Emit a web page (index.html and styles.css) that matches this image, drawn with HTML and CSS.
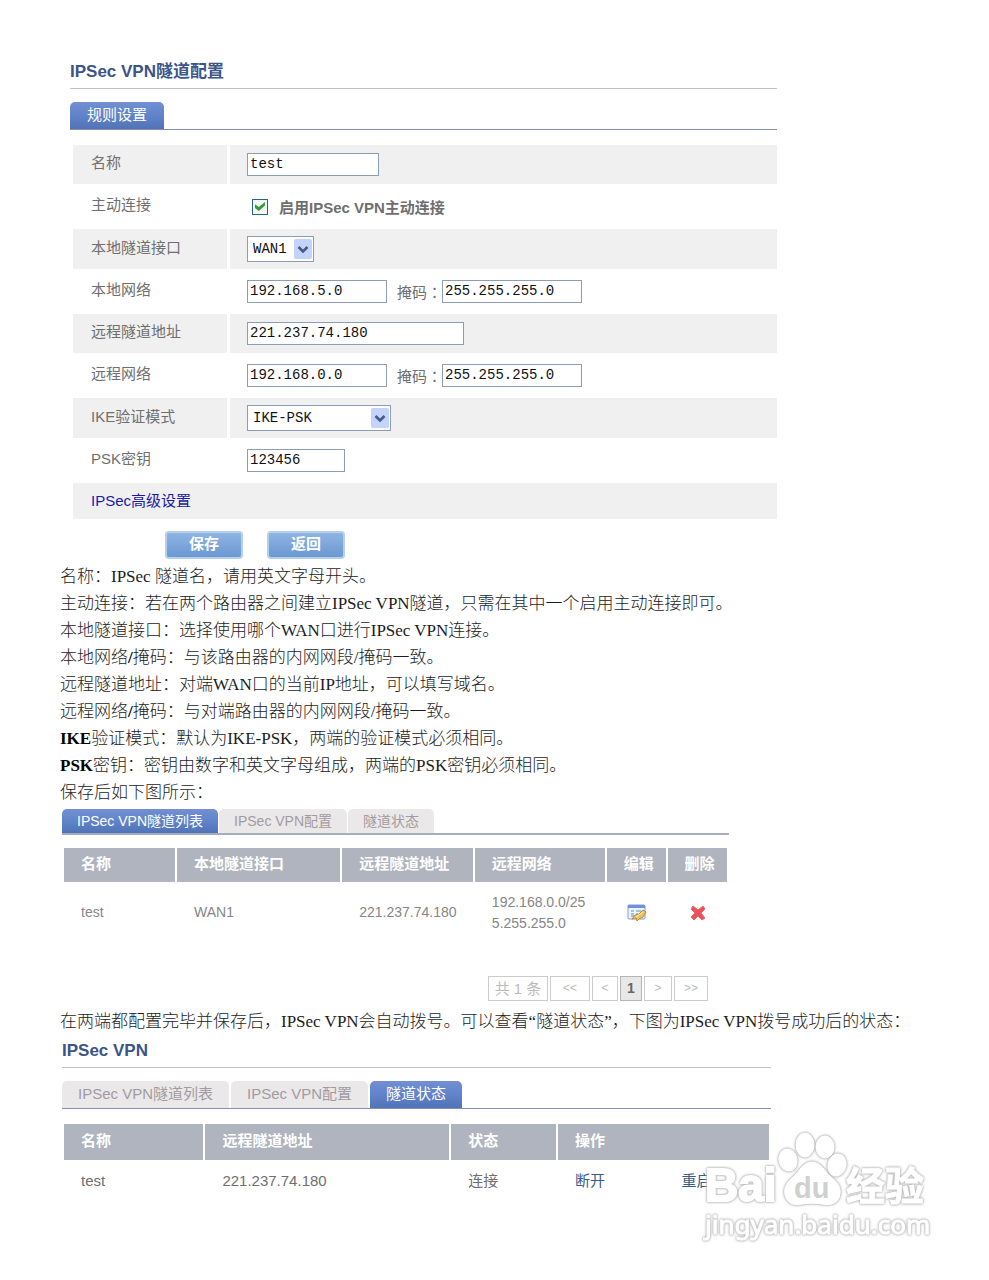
FILE: index.html
```html
<!DOCTYPE html>
<html lang="zh-CN">
<head>
<meta charset="utf-8">
<meta name="viewport" content="width=device-width, initial-scale=1">
<title>IPSec VPN隧道配置</title>
<link rel="stylesheet" href="styles.css">
</head>
<body>
<main class="page">
  <section class="panel panel-config">
    <h1 class="title">IPSec VPN隧道配置</h1>
    <nav class="tabs">
      <button type="button" class="tab active">规则设置</button>
    </nav>
    <form class="form">
      <div class="row shaded">
        <label class="name" for="name">名称</label>
        <div class="field"><input class="text w-name" id="name" type="text" value="test"></div>
      </div>
      <div class="row">
        <span class="name">主动连接</span>
        <div class="field">
          <input class="check" id="active" type="checkbox" checked>
          <label class="check-label" for="active">启用IPSec VPN主动连接</label>
        </div>
      </div>
      <div class="row shaded">
        <label class="name" for="iface">本地隧道接口</label>
        <div class="field"><select class="select w-iface" id="iface"><option>WAN1</option></select></div>
      </div>
      <div class="row">
        <label class="name" for="lnet">本地网络</label>
        <div class="field">
          <input class="text w-ip" id="lnet" type="text" value="192.168.5.0">
          <label class="mask" for="lmask" lang="zh-TW">掩码：</label>
          <input class="text w-ip" id="lmask" type="text" value="255.255.255.0">
        </div>
      </div>
      <div class="row shaded">
        <label class="name" for="raddr">远程隧道地址</label>
        <div class="field"><input class="text w-addr" id="raddr" type="text" value="221.237.74.180"></div>
      </div>
      <div class="row">
        <label class="name" for="rnet">远程网络</label>
        <div class="field">
          <input class="text w-ip" id="rnet" type="text" value="192.168.0.0">
          <label class="mask" for="rmask" lang="zh-TW">掩码：</label>
          <input class="text w-ip" id="rmask" type="text" value="255.255.255.0">
        </div>
      </div>
      <div class="row shaded">
        <label class="name" for="ike">IKE验证模式</label>
        <div class="field"><select class="select w-ike" id="ike"><option>IKE-PSK</option></select></div>
      </div>
      <div class="row">
        <label class="name" for="psk">PSK密钥</label>
        <div class="field"><input class="text w-psk" id="psk" type="text" value="123456"></div>
      </div>
      <div class="advanced"><a href="#advanced">IPSec高级设置</a></div>
      <div class="actions">
        <button type="button" class="btn">保存</button>
        <button type="button" class="btn">返回</button>
      </div>
    </form>
  </section>

  <section class="prose">
    <p>名称：IPSec 隧道名，请用英文字母开头。</p>
    <p>主动连接：若在两个路由器之间建立IPSec VPN隧道，只需在其中一个启用主动连接即可。</p>
    <p>本地隧道接口：选择使用哪个WAN口进行IPSec VPN连接。</p>
    <p>本地网络<b>/</b>掩码：与该路由器的内网网段/掩码一致。</p>
    <p>远程隧道地址：对端WAN口的当前IP地址，可以填写域名。</p>
    <p>远程网络<b>/</b>掩码：与对端路由器的内网网段/掩码一致。</p>
    <p><b>IKE</b>验证模式：默认为IKE-PSK，两端的验证模式必须相同。</p>
    <p><b>PSK</b>密钥：密钥由数字和英文字母组成，两端的PSK密钥必须相同。</p>
    <p>保存后如下图所示：</p>
  </section>

  <section class="panel panel-list">
    <nav class="tabs">
      <button type="button" class="tab active">IPSec VPN隧道列表</button>
      <button type="button" class="tab">IPSec VPN配置</button>
      <button type="button" class="tab">隧道状态</button>
    </nav>
    <table class="grid">
      <colgroup><col class="c-name"><col class="c-iface"><col class="c-addr"><col class="c-net"><col class="c-act"><col class="c-act"></colgroup>
      <thead>
        <tr><th>名称</th><th>本地隧道接口</th><th>远程隧道地址</th><th>远程网络</th><th class="center">编辑</th><th class="center">删除</th></tr>
      </thead>
      <tbody>
        <tr>
          <td>test</td><td>WAN1</td><td class="addr">221.237.74.180</td><td>192.168.0.0/255.255.255.0</td>
          <td class="icon-cell">
            <button type="button" class="icon-btn" aria-label="编辑">
              <svg width="20" height="18" viewBox="0 0 20 18">
                <rect x="1" y="1" width="17" height="14" rx="1" fill="#eef4fd" stroke="#7f9cd3"/>
                <path d="M1 1h17v3H1z" fill="#6d93dc"/>
                <path d="M4 7h3M9 7h5M4 10h3M9 10h2M4 12h3" stroke="#8daee5" stroke-width="1.5"/>
                <path d="M5 15l3-4 4-1 4-4 3 2-3 5-4 2-2 2-1-3z" fill="#f0c45a" stroke="#b98c3d"/>
                <path d="M9 13l7-5" stroke="#fff0b0"/>
              </svg>
            </button>
          </td>
          <td class="icon-cell">
            <button type="button" class="icon-btn" aria-label="删除">
              <svg width="16" height="16" viewBox="0 0 16 16">
                <path d="M3 1l5 4 5-4 2 3-4 4 4 5-3 2-4-4-4 4-3-3 4-4-4-4z" fill="#ec4f57" stroke="#e4686c" stroke-linejoin="round"/>
              </svg>
            </button>
          </td>
        </tr>
      </tbody>
    </table>
    <nav class="pager">
      <span class="total">共 1 条</span>
      <button type="button" class="first">&lt;&lt;</button>
      <button type="button" class="prev">&lt;</button>
      <button type="button" class="current">1</button>
      <button type="button" class="next">&gt;</button>
      <button type="button" class="last">&gt;&gt;</button>
    </nav>
  </section>

  <section class="prose prose-status">
    <p>在两端都配置完毕并保存后，IPSec VPN会自动拨号。可以查看“隧道状态”，下图为IPSec VPN拨号成功后的状态：</p>
  </section>

  <section class="panel panel-status">
    <h2 class="title">IPSec VPN</h2>
    <nav class="tabs">
      <button type="button" class="tab">IPSec VPN隧道列表</button>
      <button type="button" class="tab">IPSec VPN配置</button>
      <button type="button" class="tab active">隧道状态</button>
    </nav>
    <table class="grid">
      <colgroup><col class="s-name"><col class="s-addr"><col class="s-state"><col class="s-act"><col class="s-act"></colgroup>
      <thead>
        <tr><th>名称</th><th>远程隧道地址</th><th>状态</th><th colspan="2">操作</th></tr>
      </thead>
      <tbody>
        <tr><td>test</td><td>221.237.74.180</td><td>连接</td><td><a href="#disconnect">断开</a></td><td><a href="#restart">重启</a></td></tr>
      </tbody>
    </table>
  </section>

  <svg class="watermark" width="240" height="120" viewBox="0 0 240 120">
    <g class="outline">
      <text class="wm-latin" x="6" y="70">Bai</text>
      <ellipse cx="89" cy="29" rx="9" ry="11" transform="rotate(-12 89 29)"/>
      <ellipse cx="106" cy="14" rx="9" ry="12"/>
      <ellipse cx="126" cy="16" rx="9" ry="11"/>
      <ellipse cx="138" cy="34" rx="9" ry="11" transform="rotate(14 138 34)"/>
      <path d="M113 31c-9 0-12 9-19 15-8 7-9 12-8 18 2 9 10 11 17 9 6-1 14-1 20 0 9 2 17-1 18-10 1-8-3-12-9-17-7-6-10-15-19-15z"/>
      <text class="wm-cjk" x="147" y="69">经验</text>
      <text class="wm-url" x="6" y="103">jingyan.baidu.com</text>
    </g>
    <text class="wm-du" x="95" y="67">du</text>
  </svg>
</main>
</body>
</html>
```

FILE: styles.css
```css
* { box-sizing: border-box; }

body {
  margin: 0;
  background: #fff;
  color: #6f6f6f;
  font: 15px/21px "Liberation Sans", "Noto Sans CJK SC", sans-serif;
}

p, h1, h2 { margin: 0; }

button, input, select { font: inherit; color: inherit; margin: 0; }

.page {
  position: relative;
  min-height: 100vh;
  padding: 59px 60px 40px;
}

.panel { width: 100%; }
.panel-config { max-width: 717px; padding-left: 10px; }
.panel-list { max-width: 669px; padding-left: 2px; }
.panel-status { max-width: 711px; padding-left: 2px; }

.title {
  padding-bottom: 4px;
  border-bottom: 1px solid #c3c3c3;
  color: #3c5588;
  font-size: 17px;
  line-height: 25px;
}

/* Tabs */
.tabs {
  display: flex;
  gap: 2px;
  margin-top: 13px;
  border-bottom: 1px solid #8291b1;
}
.tab {
  height: 27px;
  padding: 0 17px 2px;
  border: 0;
  border-radius: 5px 5px 0 0;
  background: #ebe8ea;
  color: #a19ba1;
}
.tab.active {
  background: linear-gradient(#7390d2, #6083ca 50%, #5173b6);
  color: #fff;
}
.panel-status .tab { padding: 0 16px 2px; }
.panel-list .tabs { margin-top: 3px; border-bottom: 2px solid #a5aebf; gap: 1px; }
.panel-list .tab { height: 24px; font-size: 14px; padding: 0 15px; }

/* Form */
.form { margin-top: 15px; padding-left: 3px; }
.row {
  display: grid;
  grid-template-columns: 154px 1fr;
  gap: 3px;
  margin-bottom: 3px;
}
.name, .field { display: flex; align-items: center; min-height: 39px; }
.name { padding: 0 18px 4px; }
.field { padding: 0 17px; }
.shaded .name, .shaded .field { background: #f0f0f0; }

.text {
  height: 23px;
  padding: 0 2px 1px;
  border: 1px solid #8b9eb5;
  background: #fff;
  color: #111;
  font: 14px "Liberation Mono", monospace;
}
.w-name { width: 132px; }
.w-ip { width: 140px; }
.w-addr { width: 217px; }
.w-psk { width: 98px; }

.select {
  height: 26px;
  margin: 7px 0;
  padding: 0 24px 1px 5px;
  border: 1px solid #8b9eb5;
  border-radius: 0;
  appearance: none;
  background: #fff url("data:image/svg+xml,%3Csvg xmlns='http://www.w3.org/2000/svg' width='18' height='20'%3E%3Crect width='18' height='20' rx='2' fill='%23c3d3fb'/%3E%3Cpath d='M4.500 8l4.500 4.500 4.500-4.500' fill='none' stroke='%23465a86' stroke-width='2.600'/%3E%3C/svg%3E") no-repeat right 1px center;
  color: #111;
  font: 14px "Liberation Mono", monospace;
}
.w-iface { width: 67px; }
.w-ike { width: 144px; }

.mask { padding: 1px 0 0 10px; font-family: "Liberation Sans", "Noto Sans CJK TC", sans-serif; }

.check {
  appearance: none;
  display: grid;
  place-content: center;
  width: 16px;
  height: 16px;
  margin-left: 5px;
  border: 1px solid #2f5f8c;
  background: #f4f6f2;
}
.check:checked::before {
  content: "";
  width: 10px;
  height: 9px;
  background: #3a9a3a;
  clip-path: polygon(0 25%, 38% 55%, 100% 0, 100% 40%, 38% 100%, 0 68%);
}
.check-label { padding-left: 11px; padding-top: 2px; font-weight: bold; }

.advanced { padding: 7px 18px 8px; background: #f0f0f0; }
.advanced a { color: #1a1aa6; text-decoration: none; }

.actions { display: flex; gap: 24px; margin: 12px 0 4px; padding-left: 92px; }
.btn {
  width: 78px;
  height: 28px;
  padding: 0 0 3px;
  border: 2px solid #b4d0ec;
  border-radius: 4px;
  background: linear-gradient(#8fb4e2, #6a98d2);
  color: #fff;
  font-weight: bold;
}

/* Explanations */
.prose {
  color: #1c1c1c;
  font: 300 17px/27px "Liberation Serif", "Noto Sans CJK SC", serif;
}
.prose b { color: #000; font-weight: bold; }
.prose-status { margin: 7px 0 3px; }

/* Tables */
.grid {
  width: 100%;
  margin-top: 15px;
  border-spacing: 2px 0;
  border-collapse: separate;
  table-layout: fixed;
}
.grid th {
  height: 36px;
  padding: 0 17px 3px;
  background: #afb4be;
  color: #fff;
  text-align: left;
}
.grid td { height: 40px; padding: 0 17px; overflow-wrap: anywhere; }
.grid a { color: #3c5a85; text-decoration: none; }
.grid .center { text-align: center; padding-left: 4px; padding-right: 0; }

.panel-list .grid { margin-top: 13px; }
.panel-list th { height: 34px; }
.panel-list td { height: 61px; font-size: 14px; color: #868686; }
.panel-list .addr { padding-right: 4px; }
.panel-list .icon-cell { padding: 0; text-align: center; }
.icon-btn { padding: 0; border: 0; background: none; vertical-align: middle; }
.icon-btn svg { display: block; margin: auto; }

.c-name { width: 17%; }
.c-iface { width: 25%; }
.c-addr { width: 20%; }
.c-net { width: 20%; }
.c-act { width: 9%; }

.s-name { width: 20%; }
.s-addr { width: 35%; }
.s-state { width: 15%; }
.s-act { width: 15%; }

/* Pager */
.pager {
  display: flex;
  justify-content: flex-end;
  gap: 2px;
  margin-top: 33px;
  padding-right: 21px;
  color: #bbb;
}
.pager button, .pager .total {
  height: 25px;
  padding: 0;
  border: 1px solid #ccc;
  background: #fff;
  font-size: 14px;
  line-height: 23px;
  text-align: center;
}
.pager .total { width: 60px; font-size: 15px; }
.pager .first { width: 40px; font-size: 12px; }
.pager .prev { width: 26px; font-size: 12px; }
.pager .current { width: 22px; border-color: #b5b5b5; background: #e8e8e8; color: #666; font-weight: bold; }
.pager .next { width: 28px; font-size: 12px; }
.pager .last { width: 34px; font-size: 12px; }

/* Watermark */
.watermark { position: absolute; right: 50px; bottom: 29px; pointer-events: none; }
.outline {
  fill: #fff;
  stroke: #fff;
  stroke-width: 1;
  filter: drop-shadow(0 0 1px #b4b4b4) drop-shadow(0 0 1px #c4c4c4);
}
.wm-latin { font: bold 46px "Liberation Sans", sans-serif; stroke-width: 2; }
.wm-cjk { font: bold 39px "Noto Sans CJK SC", sans-serif; }
.wm-url { font: 26px "Noto Sans", sans-serif; }
.wm-du { font: bold 29px "Liberation Sans", sans-serif; fill: #d0d0d0; }
```
